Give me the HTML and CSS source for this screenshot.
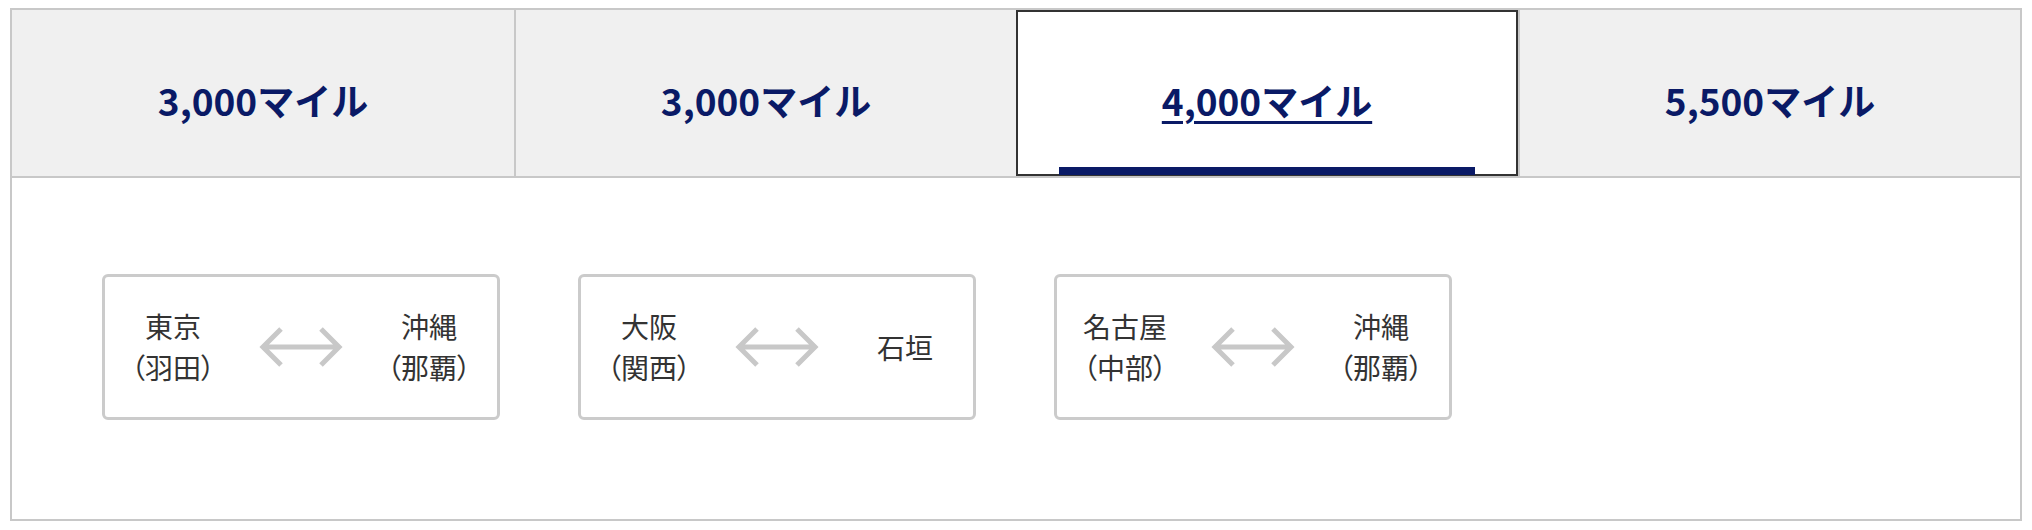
FILE: index.html
```html
<!DOCTYPE html>
<html lang="ja">
<head>
  <meta charset="UTF-8" />
  <title>特典航空券 必要マイル</title>
  <link rel="stylesheet" href="styles.css">
</head>
<body>

  <div class="panel">
    <ul class="tabs">
      <li class="tab"><a href="#">3,000マイル</a></li>
      <li class="tab"><a href="#">3,000マイル</a></li>
      <li class="tab active"><a href="#">4,000マイル</a></li>
      <li class="tab"><a href="#">5,500マイル</a></li>
    </ul>

    <div class="routes">
      <div class="route">
        <div class="city">東京<br>（羽田）</div>
        <svg class="arrow" viewBox="0 0 84 40" width="84" height="40">
          <path d="M4 20 H80 M22 2 L4 20 L22 38 M62 2 L80 20 L62 38" />
        </svg>
        <div class="city">沖縄<br>（那覇）</div>
      </div>

      <div class="route">
        <div class="city">大阪<br>（関西）</div>
        <svg class="arrow" viewBox="0 0 84 40" width="84" height="40">
          <path d="M4 20 H80 M22 2 L4 20 L22 38 M62 2 L80 20 L62 38" />
        </svg>
        <div class="city">石垣</div>
      </div>

      <div class="route">
        <div class="city">名古屋<br>（中部）</div>
        <svg class="arrow" viewBox="0 0 84 40" width="84" height="40">
          <path d="M4 20 H80 M22 2 L4 20 L22 38 M62 2 L80 20 L62 38" />
        </svg>
        <div class="city">沖縄<br>（那覇）</div>
      </div>
    </div>
  </div>

</body>
</html>
```

FILE: styles.css
```css
:root {
  --navy: #0a1a66;
  --line: #c8c8c8;
}

* {
  box-sizing: border-box;
}

body {
  margin: 0;
  background: #fff;
  font-family: "Noto Sans CJK JP", "Noto Sans", sans-serif;
  color: #333;
}

.panel {
  margin: 8px 10px 0;
  height: 513px;
  border: 2px solid var(--line);
}

.tabs {
  list-style: none;
  margin: 0;
  padding: 0;
  display: grid;
  grid-template-columns: repeat(4, 1fr);
  height: 168px;
  border-bottom: 2px solid var(--line);
}

.tab {
  position: relative;
  display: flex;
  align-items: center;
  justify-content: center;
  padding-top: 14px;
  background: #f0f0f0;
  border-left: 2px solid var(--line);
}

.tab:first-child {
  border-left: none;
}

.tab a {
  color: var(--navy);
  font-size: 37px;
  font-weight: bold;
  text-decoration: none;
}

.tab.active {
  background: #fff;
  border: 2px solid #333;
}

.tab.active a {
  text-decoration: underline;
  text-decoration-thickness: 3px;
  text-underline-offset: 5px;
}

/* navy bar under the current tab */
.tab.active::after {
  content: "";
  position: absolute;
  left: 41px;
  right: 41px;
  bottom: -1px;
  height: 8px;
  background: var(--navy);
}

.routes {
  display: flex;
  gap: 78px;
  padding: 96px 0 0 90px;
}

.route {
  width: 398px;
  height: 146px;
  border: 3px solid #cbcbcb;
  border-radius: 6px;
  display: flex;
  align-items: center;
  justify-content: space-between;
  padding: 0 24px;
}

.city {
  width: 88px;
  text-align: center;
  font-size: 28px;
  line-height: 41px;
  white-space: nowrap;
  font-feature-settings: "palt";
}

.arrow path {
  fill: none;
  stroke: #c8c8c8;
  stroke-width: 5;
}
```
